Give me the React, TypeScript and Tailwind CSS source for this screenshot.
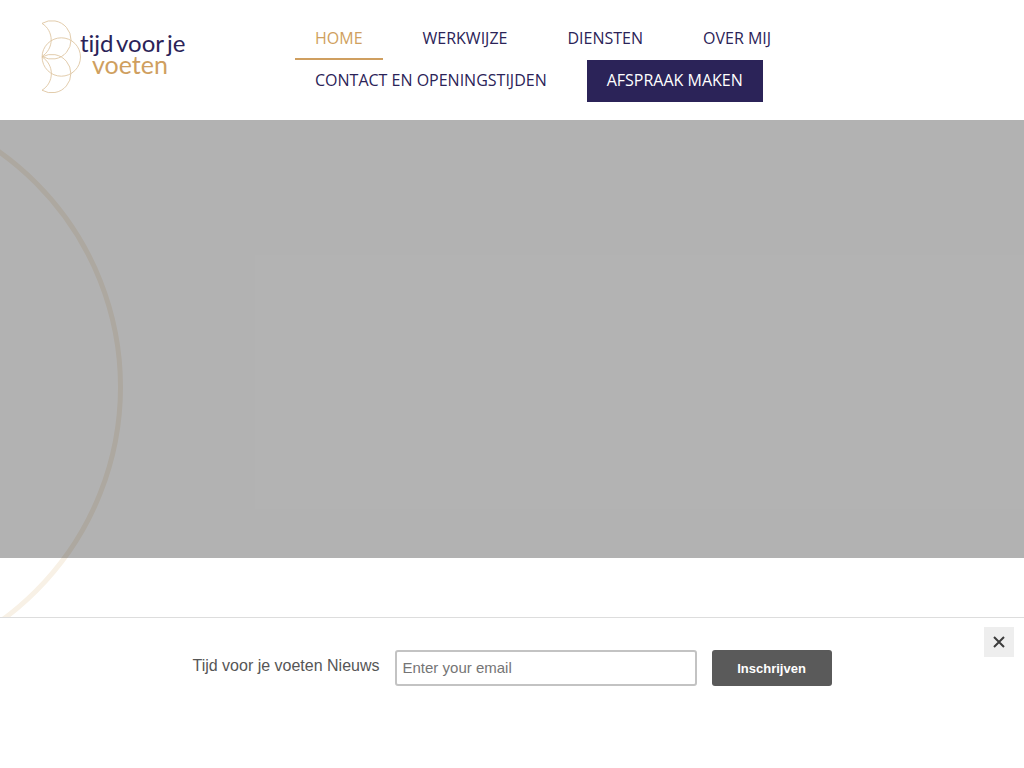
const navItems = [
  { label: "HOME", href: "#home", variant: "active" },
  { label: "WERKWIJZE", href: "#werkwijze", variant: "default" },
  { label: "DIENSTEN", href: "#diensten", variant: "default" },
  { label: "OVER MIJ", href: "#over-mij", variant: "default" },
  { label: "CONTACT EN OPENINGSTIJDEN", href: "#contact", variant: "default" },
  { label: "AFSPRAAK MAKEN", href: "#afspraak", variant: "button" },
];

const navStyles: Record<string, string> = {
  active: "border-[#cf9f60] text-[#cf9f60]",
  default: "border-transparent text-[#2b2358]",
  button: "border-[#2b2358] bg-[#2b2358] font-medium text-white",
};

function Logo() {
  return (
    <svg
      className="[font-variant-ligatures:none]"
      width="148"
      height="76"
      viewBox="40 19 148 76"
      role="img"
      aria-label="Tijd voor je voeten"
    >
      <g fill="none" stroke="#dfc6a3" strokeWidth="0.9">
        <circle cx="61.3" cy="57" r="19.2" />
        <path d="M42 23.4A19.2 19.2 0 1 1 42 56.4A19.4 19.4 0 0 0 42 23.4" />
        <path d="M42 57A19.2 19.2 0 1 1 42 90.2A19.4 19.4 0 0 0 42 57" />
      </g>
      <g fontFamily="Lato, sans-serif">
        <g fill="#2b2358" fontSize="24">
          <text x="80" y="52">tijd</text>
          <text x="116" y="52">voor</text>
          <text x="167" y="52">je</text>
        </g>
        <text x="92" y="74" fill="#cf9f60" fontSize="25">voeten</text>
      </g>
    </svg>
  );
}

function Header() {
  return (
    <header className="relative flex min-h-[120px] items-start bg-white pb-[18px] pl-10">
      <a href="#home" className="mt-[19px] shrink-0">
        <Logo />
      </a>
      <nav className="ml-[107px] mt-[18px] max-w-[520px] flex-1">
        <ul className="flex flex-wrap gap-x-5">
          {navItems.map((item) => (
            <li key={item.label}>
              <a
                href={item.href}
                className={`block h-[42px] border-b-2 px-5 text-base leading-10 ${navStyles[item.variant]}`}
              >
                {item.label}
              </a>
            </li>
          ))}
        </ul>
      </nav>
    </header>
  );
}

function Hero() {
  return (
    <section className="relative">
      <svg
        className="absolute left-0 top-0"
        width="130"
        height="560"
        viewBox="0 0 130 560"
        aria-hidden="true"
      >
        <circle cx="-168" cy="267" r="288.5" fill="none" stroke="#f8f1e6" strokeWidth="5" />
      </svg>
      <div className="relative h-[438px] bg-black/30" />
    </section>
  );
}

function NewsletterBar() {
  return (
    <aside className="fixed inset-x-0 bottom-0 h-[151px] border-t border-[#dddddd] bg-white px-4 pt-8 font-['Liberation_Sans',Arial,sans-serif]">
      <form
        className="flex items-start justify-center gap-[15px]"
        onSubmit={(e) => e.preventDefault()}
      >
        <label htmlFor="email" className="text-base leading-8 text-[#565656]">
          Tijd voor je voeten Nieuws
        </label>
        <input
          id="email"
          type="email"
          placeholder="Enter your email"
          className="h-9 w-[302px] rounded-[3px] border-2 border-[#c3c3c3] px-1.5 pb-0.5 text-[15px] text-[#565656] placeholder:text-[#757575]"
        />
        <button
          type="submit"
          className="h-9 w-[120px] rounded-[3px] bg-[#5a5a5a] pt-0.5 text-[13px] font-bold text-white"
        >
          Inschrijven
        </button>
      </form>
      <button
        type="button"
        aria-label="Sluiten"
        className="absolute right-2.5 top-[9px] flex size-[30px] items-center justify-center bg-[#eeeeee] text-[#3c3c3c]"
      >
        <svg width="12" height="12" viewBox="0 0 12 12" stroke="currentColor" strokeWidth="2">
          <path d="M1 1L11 11M11 1L1 11" />
        </svg>
      </button>
    </aside>
  );
}

export default function App() {
  return (
    <div className="min-h-screen bg-white font-['Open_Sans',sans-serif]">
      <Header />
      <main>
        <Hero />
      </main>
      <NewsletterBar />
    </div>
  );
}
